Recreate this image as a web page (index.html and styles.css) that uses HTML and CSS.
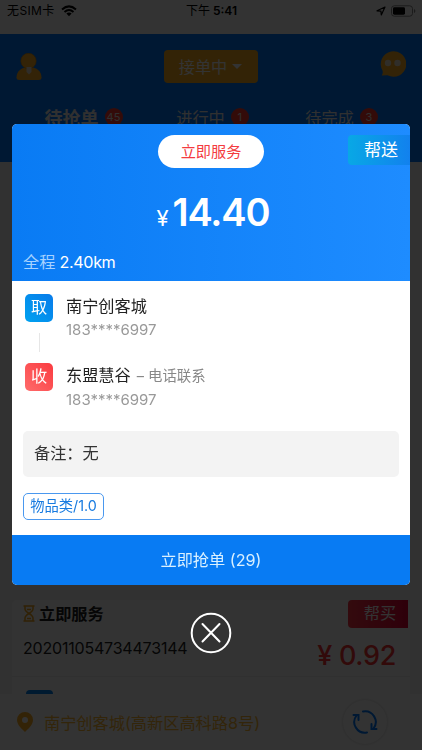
FILE: index.html
```
<!DOCTYPE html>
<html lang="zh-CN">
<head>
	<meta charset="utf-8">
	<meta name="viewport" content="width=device-width, initial-scale=1">
	<title>待抢单</title>
	<link rel="stylesheet" href="styles.css">
</head>
<body>
	<div class="page">
		<div class="status">
			<div class="carrier"><span class="nosim">无SIM卡</span>
				<svg width="16" height="12" viewBox="0 0 16 12"><path d="M1 4.4Q8-1.7 15 4.4M3.5 7Q8 3.1 12.5 7" fill="none" stroke="#000" stroke-width="2"/><path d="M5.4 8.5Q8 6.4 10.6 8.5L8 11.2z"/></svg>
			</div>
			<div class="clock"><span class="noon">下午</span><b class="time">5:41</b></div>
			<div class="power">
				<svg width="10" height="10" viewBox="0 0 10 10"><path d="M1 4.8L9 1L5.3 9L4.9 5.1z" fill="none" stroke="#000" stroke-width="1.2" stroke-linejoin="round"/></svg>
				<svg width="25" height="12" viewBox="0 0 25 12"><rect x=".5" y=".8" width="21" height="10.4" rx="2.8" fill="none" stroke="#888"/><rect x="2" y="2.3" width="12" height="7.4" rx="1.4"/><path d="M23 4v4q1.4-.5 1.4-2T23 4" fill="#888"/></svg>
			</div>
		</div>
		<div class="header">
			<div class="bar">
				<svg class="user" width="26" height="28" viewBox="0 0 26 28"><path d="M.5 24.5C.5 18 6 14 13 14s12.500 4 12.500 10.500q0 2.500-3 2.500h-19q-3 0-3-2.500z" fill="#ffae24"/><circle cx="12.500" cy="8" r="7.700" fill="#ffae24" stroke="#d5860a" stroke-width=".6"/><path d="M10.500 14h5v5l-2.500 2.500-2.500-2.500z" fill="#e8e0d0"/></svg>
				<div class="state"><span>接单中</span><i class="caret"></i></div>
				<svg class="chat" width="27" height="27" viewBox="0 0 27 27"><path d="M3.500 20.500A12.800 12.800 0 1 1 8.500 25.300L2.700 25.600Q4.300 23.200 3.500 20.500z" fill="#ffae24"/><circle cx="9" cy="13" r="3.200" fill="#eee6d0"/><circle cx="18.500" cy="13" r="3.200" fill="#eee6d0"/></svg>
			</div>
			<div class="tabs">
				<div class="tab on">待抢单<span class="num">45</span></div>
				<div class="tab">进行中<span class="num">1</span></div>
				<div class="tab">待完成<span class="num">3</span></div>
			</div>
		</div>
		<div class="list">
			<div class="order first"></div>
			<div class="order">
				<div class="row">
					<div class="kind">
						<svg width="12" height="17" viewBox="0 0 12 17" fill="none" stroke="#f3a51b" stroke-width="1.500"><path d="M.5 1h11M.5 16h11M2 1v3q0 2 4 4.500Q10 6 10 4V1M2 16v-3q0-2 4-4.500Q10 11 10 13v3M4 4.500h4M4 13.500h4"/></svg>
						<b>立即服务</b>
					</div>
					<div class="flag buy">帮买</div>
				</div>
				<div class="row info"><span class="no">202011054734473144</span><span class="fee">¥ 0.92</span></div>
				<div class="more"><i class="peek"></i></div>
			</div>
		</div>
		<div class="footer">
			<svg class="pin" width="16" height="20" viewBox="0 0 16 20"><path d="M8 0a8 8 0 0 1 8 8c0 5-5 9-8 12C5 17 0 13 0 8a8 8 0 0 1 8-8zm0 5a3 3 0 1 0 0 6 3 3 0 0 0 0-6z" fill="#ffae24" fill-rule="evenodd"/></svg>
			<span class="addr">南宁创客城(高新区高科路8号)</span>
			<div class="refresh">
				<svg width="26" height="26" viewBox="0 0 26 26" fill="none" stroke="#007aff" stroke-width="2" stroke-linecap="round"><path d="M11 2.500A10.700 10.700 0 0 1 21.500 19.500M15 23.500A10.700 10.700 0 0 1 4.500 6.500"/><path d="M1.500 6h5v5M24.500 20h-5v-5"/></svg>
			</div>
		</div>
	</div>

	<div class="mask">
		<div class="popup">
			<div class="top">
				<div class="service">立即服务</div>
				<div class="flag send">帮送</div>
				<div class="price"><span class="yen">¥</span>14.40</div>
				<div class="distance"><span class="label">全程</span> 2.40km</div>
			</div>
			<div class="detail">
				<div class="stop">
					<div class="mark take">取</div>
					<div>
						<div class="place">南宁创客城</div>
						<div class="phone">183****6997</div>
					</div>
				</div>
				<div class="line"></div>
				<div class="stop">
					<div class="mark give">收</div>
					<div>
						<div class="place">东盟慧谷<span class="contact">– 电话联系</span></div>
						<div class="phone">183****6997</div>
					</div>
				</div>
				<div class="remark">备注：无</div>
				<div class="goods">物品类/1.0</div>
			</div>
			<div class="grab">立即抢单 (29)</div>
		</div>
		<svg class="close" width="42" height="42" viewBox="0 0 42 42" fill="none" stroke="#fff" stroke-width="2"><circle cx="21" cy="21" r="19.300"/><path d="M12.500 12l17 17.500M29.500 12l-17 17.500" stroke-linecap="round"/></svg>
	</div>
</body>
</html>
```
FILE: styles.css
```
* {box-sizing:border-box;}
body {margin:0;font-family:Inter,"Noto Sans CJK SC",sans-serif;font-size:16.2px;color:#222;overflow:hidden;}
svg {display:block;flex:none;}
i {font-style:normal;}
.page {height:750px;background:#f5f5f5;display:flex;flex-direction:column;}

.status {height:34px;flex:none;background:#fff;display:grid;grid-template-columns:1fr auto 1fr;padding:0 6px 12px 7px;align-items:center;font-size:12px;color:#000;}
.carrier, .power {display:flex;align-items:center;gap:5px;}
.power {justify-content:flex-end;}
.nosim {width:49px;white-space:nowrap;letter-spacing:.4px;}
.clock {display:flex;align-items:center;gap:3px;}
.noon, .nosim {line-height:16px;}
.time {font-weight:600;line-height:16px;}

.header {height:128px;flex:none;background:#007aff;}
.bar {height:66px;padding:16px 16px 0;display:flex;justify-content:space-between;align-items:flex-start;}
.user {margin-top:3px;}
.state {width:94px;height:33px;border-radius:4px;background:#ffb020;color:#fff;display:flex;align-items:center;justify-content:center;gap:5px;}
.state span {margin-top:-1px;}
.caret {border:5px solid transparent;border-top-color:#fff;border-bottom:0;}
.tabs {display:flex;padding:3px 16px 0 19px;}
.tab {flex:1;display:flex;justify-content:center;align-items:center;gap:6px;height:28px;color:#eee;}
.on {font-size:18px;font-weight:bold;}
.num {width:18px;height:18px;border-radius:9px;background:#ff3a2f;font-size:11px;font-weight:normal;line-height:18px;text-align:center;}

.list {flex:1;padding:26px 12px 0;overflow:hidden;}
.order {background:#fff;border-radius:5px;}
.first {height:397px;margin-bottom:15px;}
.row {display:flex;justify-content:space-between;padding-left:11px;}
.kind {display:flex;align-items:center;gap:4px;height:27px;}
.kind b {margin-top:-1px;}
.flag {width:62px;height:30px;border-radius:4px 0 0 4px;color:#fff;line-height:30px;text-align:center;padding-left:4px;}
.buy {width:60px;height:28px;line-height:27px;margin-right:2px;background:linear-gradient(90deg,#ff3545,#e50035);}
.info {height:48px;padding-right:14px;}
.no {line-height:40px;font-size:16px;letter-spacing:-.2px;}
.fee {color:#f83434;font-size:27px;font-weight:500;line-height:55px;letter-spacing:-.3px;}
.more {border-top:1px solid #eee;padding:13px 14px 0;height:40px;}
.peek {display:block;width:27px;height:27px;border-radius:4px;background:#0080f0;}
.footer {height:56px;flex:none;background:#fff;display:flex;align-items:center;padding:0 35px 0 17px;}
.addr {margin-left:11px;flex:1;color:#ffb834;}
.refresh {width:44px;height:44px;border-radius:50%;box-shadow:0 0 3px #ccc;display:flex;align-items:center;justify-content:center;}

.mask {position:fixed;top:0;left:0;right:0;bottom:0;background:rgba(0,0,0,.8);padding:124px 12px 0;}
.popup {height:461px;border-radius:5px;overflow:hidden;background:#fff;display:flex;flex-direction:column;}
.top {position:relative;height:157px;flex:none;padding-top:11px;background:linear-gradient(90deg,#097bf4,#1e8cff);color:#fff;}
.service {width:106px;height:33px;border-radius:17px;margin:0 auto;background:#fff;color:#f43b40;font-size:15.2px;line-height:34px;text-align:center;}
.send {position:absolute;top:11px;right:0;font-size:17px;background:linear-gradient(90deg,#08a8e5,#1281ee);}
.price {display:flex;justify-content:center;align-items:baseline;gap:5px;margin-top:20px;font-size:38px;font-weight:600;line-height:48px;letter-spacing:-1.1px;padding-left:4px;}
.yen {font-size:22px;font-weight:normal;}
.distance {position:absolute;left:11px;bottom:7px;line-height:24px;letter-spacing:-.4px;}
.label {color:#a6d2ff;letter-spacing:0;}
.detail {flex:1;padding:13px 11px 0;}
.stop {display:flex;gap:13px;height:50px;padding-left:2px;}
.mark {width:28px;height:28px;border-radius:5px;color:#fff;line-height:27px;text-align:center;}
.take {background:linear-gradient(45deg,#00a2f0,#087bea);}
.give {background:linear-gradient(45deg,#ff6b6b,#fa3b40);}
.line {width:1px;height:19px;margin:-11px 0 11px 16px;background:#e6e6e6;}
.place {line-height:24px;color:#222;}
.contact {margin-left:6px;font-size:14.4px;color:#888;}
.phone {line-height:23px;font-size:15px;color:#999;}
.remark {height:46px;margin-top:18px;border-radius:5px;background:#f3f3f3;line-height:45px;padding-left:11px;color:#333;}
.goods {width:81px;height:27px;margin-top:16px;border:1px solid #4a98ef;border-radius:5px;color:#187be0;font-size:14.3px;line-height:24px;text-align:center;}
.grab {height:50px;flex:none;background:#087bf3;color:#d9f0ff;line-height:50px;text-align:center;}
.close {margin:27px auto 0;}
```
